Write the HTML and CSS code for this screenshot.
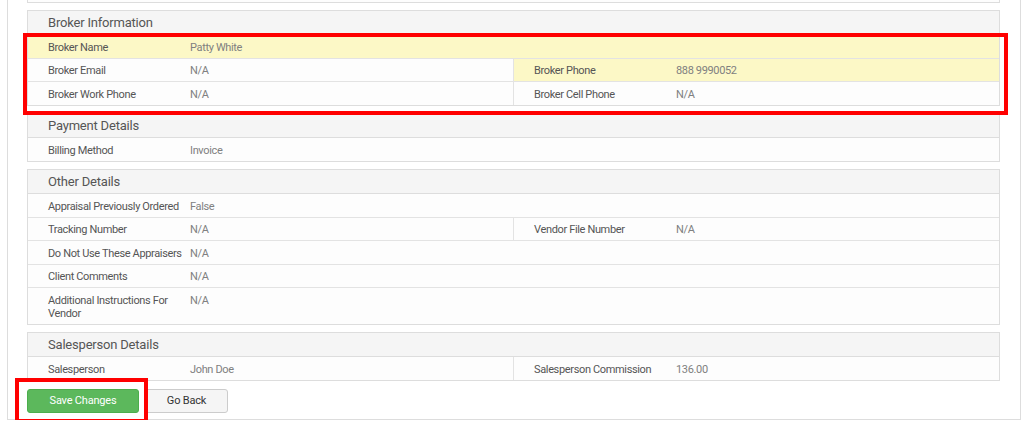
FILE: index.html
```html
<!DOCTYPE html>
<html lang="en">
<head>
    <meta charset="UTF-8">
    <meta name="viewport" content="width=device-width, initial-scale=1.0">
    <title>Order Details</title>
    <link rel="stylesheet" href="styles.css">
</head>
<body>
    <div class="page">
        <div class="panel stub"></div>

        <div class="panel">
            <div class="panel-heading">Broker Information</div>
            <div class="marked">
                <div class="row highlight">
                    <div class="cell"><span class="label">Broker Name</span><span class="value">Patty White</span></div>
                </div>
                <div class="row">
                    <div class="cell"><span class="label">Broker Email</span><span class="value">N/A</span></div>
                    <div class="cell highlight"><span class="label">Broker Phone</span><span class="value">888 9990052</span></div>
                </div>
                <div class="row">
                    <div class="cell"><span class="label">Broker Work Phone</span><span class="value">N/A</span></div>
                    <div class="cell"><span class="label">Broker Cell Phone</span><span class="value">N/A</span></div>
                </div>
                <span class="mark mark-rows"></span>
            </div>
        </div>

        <div class="panel">
            <div class="panel-heading">Payment Details</div>
            <div class="row">
                <div class="cell"><span class="label">Billing Method</span><span class="value">Invoice</span></div>
            </div>
        </div>

        <div class="panel">
            <div class="panel-heading">Other Details</div>
            <div class="row">
                <div class="cell"><span class="label">Appraisal Previously Ordered</span><span class="value">False</span></div>
            </div>
            <div class="row">
                <div class="cell"><span class="label">Tracking Number</span><span class="value">N/A</span></div>
                <div class="cell"><span class="label">Vendor File Number</span><span class="value">N/A</span></div>
            </div>
            <div class="row">
                <div class="cell"><span class="label">Do Not Use These Appraisers</span><span class="value">N/A</span></div>
            </div>
            <div class="row">
                <div class="cell"><span class="label">Client Comments</span><span class="value">N/A</span></div>
            </div>
            <div class="row">
                <div class="cell"><span class="label">Additional Instructions For Vendor</span><span class="value">N/A</span></div>
            </div>
        </div>

        <div class="panel">
            <div class="panel-heading">Salesperson Details</div>
            <div class="row">
                <div class="cell"><span class="label">Salesperson</span><span class="value">John Doe</span></div>
                <div class="cell"><span class="label">Salesperson Commission</span><span class="value">136.00</span></div>
            </div>
        </div>

        <div class="actions">
            <span class="marked">
                <button class="btn btn-success">Save Changes</button>
                <span class="mark mark-btn"></span>
            </span>
            <button class="btn btn-default">Go Back</button>
        </div>
    </div>
</body>
</html>
```

FILE: styles.css
```css
body {
    margin: 0;
    background-color: #fff;
    font-family: Roboto, "Liberation Sans", Arial, sans-serif;
    font-size: 11px;
    color: #555;
}
.page {
    margin: 0 3px 0 7px;
    padding: 0 20px 6px 19px;
    border: 1px solid #ddd;
    border-top: none;
}
.panel {
    border: 1px solid #ddd;
    margin-bottom: 7.5px;
    background-color: #fdfdfd;
}
.panel.stub {
    height: 2px;
    border-top: none;
    margin-bottom: 7px;
}
.panel-heading {
    height: 23px;
    line-height: 24px;
    padding-left: 20px;
    font-size: 13px;
    letter-spacing: -0.2px;
    color: #555;
    background-color: #f5f5f5;
    border-bottom: 1px solid #ddd;
}
.row {
    display: flex;
}
.row + .row {
    border-top: 1px solid #e3e3e3;
}
.cell {
    flex: 1;
    display: flex;
    padding: 5.5px 0 4px 20px;
    line-height: 13px;
    letter-spacing: -0.35px;
}
.cell + .cell {
    border-left: 1px solid #e3e3e3;
}
.highlight, .row.highlight .cell {
    background-color: #fcf8c6;
}
.label {
    width: 142px;
    flex-shrink: 0;
    padding-right: 2px;
    box-sizing: border-box;
    color: #555;
}
.value {
    color: #808080;
}
.marked {
    position: relative;
    display: block;
}
.actions {
    display: flex;
    gap: 6px;
    padding-top: 0.5px;
}
.actions .marked {
    display: inline-block;
}
.btn {
    height: 24px;
    font-family: inherit;
    font-size: 11px;
    letter-spacing: -0.2px;
    border-radius: 3px;
    cursor: pointer;
    padding: 0;
}
.btn-success {
    display: block;
    width: 112px;
    color: #fff;
    background-color: #5cb85c;
    border: 1px solid #4cae4c;
}
.btn-default {
    width: 83px;
    color: #333;
    background-color: #f5f5f5;
    border: 1px solid #ccc;
}
.mark {
    position: absolute;
    border: 4px solid #f00;
    pointer-events: none;
}
.mark-rows {
    left: -5px;
    top: -2px;
    right: -9px;
    bottom: -10px;
}
.mark-btn {
    left: -12px;
    top: -11px;
    right: -9px;
    bottom: -10px;
}
```
